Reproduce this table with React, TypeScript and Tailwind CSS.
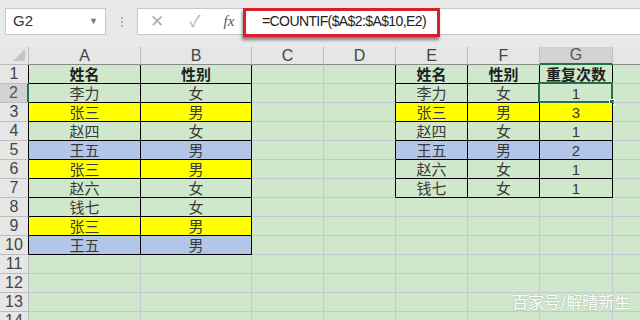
import React from "react";

// H is off the right edge in the screenshot, so its header shows no letter
const cols = ["A", "B", "C", "D", "E", "F", "G", ""];

// sheet contents, keyed by "col,row"
const cells: Record<string, string> = {};
const left = [
    ["姓名", "性别"],
    ["李力", "女"],
    ["张三", "男"],
    ["赵四", "女"],
    ["王五", "男"],
    ["张三", "男"],
    ["赵六", "女"],
    ["钱七", "女"],
    ["张三", "男"],
    ["王五", "男"],
];
const right = [
    ["姓名", "性别", "重复次数"],
    ["李力", "女", "1"],
    ["张三", "男", "3"],
    ["赵四", "女", "1"],
    ["王五", "男", "2"],
    ["赵六", "女", "1"],
    ["钱七", "女", "1"],
];
left.forEach((r, i) => r.forEach((v, j) => (cells[`${j + 1},${i + 1}`] = v)));
right.forEach((r, i) => r.forEach((v, j) => (cells[`${j + 5},${i + 1}`] = v)));

const fillOf = (c: number, r: number) => {
    const v = c <= 2 ? cells[`1,${r}`] : cells[`5,${r}`];
    if (r === 1) return "";
    if (v === "张三") return "yellow";
    if (v === "王五") return "blue";
    return "";
};

const inTable = (c: number, r: number) =>
    (c >= 1 && c <= 2 && r >= 1 && r <= 10) || (c >= 5 && c <= 7 && r >= 1 && r <= 7);

function Cell({ c, r }: { c: number; r: number }) {
    const black = inTable(c, r);
    const rightBlack = black || inTable(c + 1, r);
    const bottomBlack = black || inTable(c, r + 1);
    const fill = black ? fillOf(c, r) : "";
    const text = cells[`${c},${r}`] ?? "";
    return (
        <div
            className={[
                "relative h-[19px] flex items-center justify-center border-r border-b text-[15px] leading-none",
                rightBlack ? "border-r-black" : "border-r-[#c3c8d2]",
                bottomBlack ? "border-b-black" : "border-b-[#c3c8d2]",
                fill === "yellow" ? "bg-[#ffff00]" : fill === "blue" ? "bg-[#b4c6e7]" : "",
                r === 1 ? "font-bold text-[#1f1f1f]" : "text-[#3a3a3a]",
            ].join(" ")}
        >
            {text}
            {c === 7 && r === 2 && (
                <div className="absolute -left-[2px] -top-[2px] -right-[1px] -bottom-[1px] border-2 border-[#217346]">
                    <div className="absolute -right-[4px] -bottom-[4px] w-[6px] h-[6px] bg-[#217346] border border-white" />
                </div>
            )}
        </div>
    );
}

export default function App() {
    const rows = Array.from({ length: 14 }, (_, i) => i + 1);
    return (
        <div className="w-[640px] h-[320px] overflow-hidden bg-[#cfe8cc] relative font-['Liberation_Sans','Noto_Sans_CJK_SC',sans-serif]">
            {/* toolbar */}
            <div className="h-[47px] bg-[#e9e9e9] flex items-start pt-[8px] pl-[5px]">
                <div className="w-[101px] h-[27px] bg-white border border-[#c8c8c8] flex items-center justify-between pl-[7px] pr-[7px]">
                    <span className="text-[15px] text-[#333]">G2</span>
                    <span className="text-[9px] text-[#777]">▼</span>
                </div>
                <div className="w-[31px] h-[27px] flex flex-col items-center justify-center gap-[2px]">
                    <span className="w-[2px] h-[2px] bg-[#b0b0b0]" />
                    <span className="w-[2px] h-[2px] bg-[#b0b0b0]" />
                    <span className="w-[2px] h-[2px] bg-[#b0b0b0]" />
                </div>
                <div className="flex-1 h-[27px] bg-white border border-r-0 border-[#c8c8c8] flex items-center">
                    <span className="w-[38px] text-center text-[17px] text-[#b0b0b0]">✕</span>
                    <span className="w-[38px] text-center text-[16px] text-[#b0b0b0]">✓</span>
                    <span className="w-[30px] text-center text-[15px] italic text-[#555] font-['Liberation_Serif',serif]">fx</span>
                    <div className="relative h-full flex items-center pl-[18px] text-[14px] tracking-[-0.6px] text-[#222]">
                        <span className="w-[2px] h-full bg-[#dcdcdc] absolute left-0" />
                        =COUNTIF($A$2:$A$10,E2)
                    </div>
                </div>
            </div>
            {/* red annotation box */}
            <div className="absolute left-[243px] top-[8px] w-[197px] h-[29px] border-[3px] border-[#d8202a] shadow-[-1px_3px_3px_rgba(0,0,0,0.45)]" />

            {/* sheet */}
            <div className="grid grid-cols-[29px_112px_111px_72px_72px_72px_72px_73px_72px]">
                {/* column headers */}
                <div className="h-[18px] bg-[#e6e6e6] border-r border-b border-[#bdbdbd] relative">
                    <div className="absolute right-[3px] bottom-[3px] w-0 h-0 border-l-[12px] border-l-transparent border-b-[12px] border-b-[#c4c4c4]" />
                </div>
                {cols.map((l, i) => (
                    <div
                        key={i}
                        className={
                            i === 6
                                ? "h-[18px] bg-[#d2d2d2] border-r border-[#bdbdbd] border-b-2 border-b-[#217346] flex items-center justify-center text-[16px] text-[#555]"
                                : "h-[18px] bg-[#e6e6e6] border-r border-b border-r-[#bdbdbd] border-b-[#8a8a8a] flex items-center justify-center text-[16px] text-[#444]"
                        }
                    >
                        {l}
                    </div>
                ))}
                {rows.map((r) => (
                    <React.Fragment key={r}>
                        <div
                            className={[
                                "h-[19px] border-b border-b-[#bdbdbd] flex items-center justify-center text-[16px]",
                                r === 2
                                    ? "bg-[#d2d2d2] border-r-2 border-r-[#217346] text-[#555]"
                                    : "bg-[#e6e6e6] border-r text-[#444]",
                                r !== 2 && r <= 10 ? "border-r-black" : r !== 2 ? "border-r-[#bdbdbd]" : "",
                            ].join(" ")}
                        >
                            {r}
                        </div>
                        {cols.map((_, i) => (
                            <Cell key={i} c={i + 1} r={r} />
                        ))}
                    </React.Fragment>
                ))}
            </div>

            {/* watermark */}
            <div className="absolute left-[512px] top-[289px] text-[16px] text-white [text-shadow:0_0_2px_rgba(0,0,0,0.25)] font-['Noto_Sans_CJK_SC',sans-serif]">
                百家号/解晴新生
            </div>
        </div>
    );
}
